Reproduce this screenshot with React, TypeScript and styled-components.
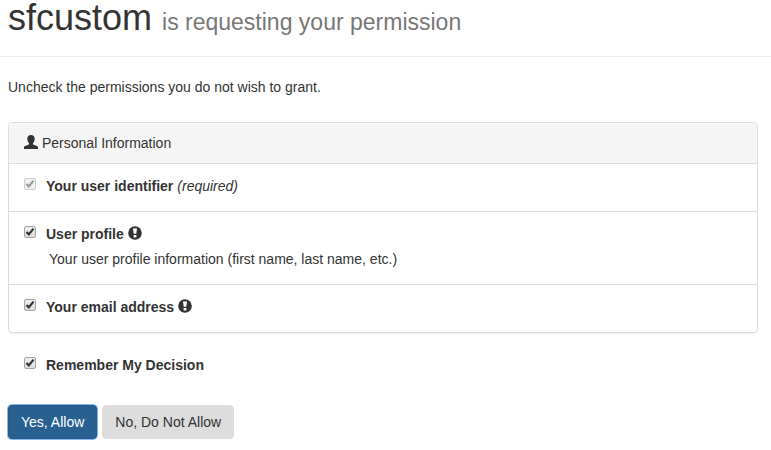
import React, { useState } from "react";
import styled, { createGlobalStyle } from "styled-components";

const GlobalStyle = createGlobalStyle`
  *, *::before, *::after { box-sizing: border-box; }
  body {
    margin: 0;
    background: #fff;
    color: #333;
    font-family: "Liberation Sans", Arial, Helvetica, sans-serif;
    font-size: 14px;
    line-height: 20px;
  }
`;

const Header = styled.header`
  padding: 0 8px 20px;
  border-bottom: 1px solid #eee;
`;

const Title = styled.h1`
  margin: 0;
  font-size: 36px;
  font-weight: 400;
  line-height: 36px;
`;

const Subtitle = styled.small`
  color: #777;
  font-size: 23px;
  line-height: 1;
`;

const Content = styled.form`
  padding: 20px 13px 11px 8px;
`;

const Intro = styled.p`
  margin: 0 0 25px;
`;

const Panel = styled.section`
  border: 1px solid #ddd;
  border-radius: 4px;
  box-shadow: 0 1px 1px rgba(0, 0, 0, 0.05);
  overflow: hidden;
`;

const PanelHeading = styled.h2`
  display: flex;
  align-items: flex-start;
  gap: 4px;
  margin: 0;
  padding: 10px 15px;
  background: #f5f5f5;
  font-size: 14px;
  font-weight: 400;
`;

const ScopeList = styled.ul`
  list-style: none;
  margin: 0;
  padding: 0;
`;

const ScopeItem = styled.li`
  padding: 12px 15px 15px;
  border-top: 1px solid #ddd;
`;

const ScopeLine = styled.div`
  display: flex;
  gap: 4px;
`;

const CheckLabel = styled.label`
  display: flex;
  align-items: flex-start;
  gap: 10px;
  font-weight: 700;
`;

const CheckBox = styled.span`
  display: grid;
  width: 12px;
  height: 12px;
  margin-top: 2px;
  > * { grid-area: 1 / 1; }
`;

const CheckInput = styled.input`
  appearance: none;
  width: 12px;
  height: 12px;
  margin: 0;
  border: 1px solid #a4a4a4;
  border-radius: 2px;
  background: linear-gradient(#eee, #dcdcdc);
  & + svg { visibility: hidden; pointer-events: none; color: #333; }
  &:checked + svg { visibility: visible; }
  &:disabled { border-color: #ccc; background: #f1f1f1; }
  &:disabled + svg { color: #999; }
`;

const Description = styled.p`
  margin: 5px 0 0;
  padding-left: 25px;
`;

const Glyph = styled.svg`
  flex: none;
  width: 14px;
  height: 14px;
  margin-top: 2px;
  fill: currentColor;
`;

const Remember = styled.div`
  padding: 22px 16px 30px;
`;

const Actions = styled.div`
  display: flex;
  gap: 5px;
`;

const Button = styled.button<{ $primary?: boolean }>`
  padding: 6px 12px;
  border: 1px solid ${(p) => (p.$primary ? "#265a88" : "#ddd")};
  border-radius: 4px;
  background: ${(p) => (p.$primary ? "#286090" : "#ddd")};
  box-shadow: ${(p) => (p.$primary ? "0 0 0 1px #8ab6f5" : "none")};
  color: ${(p) => (p.$primary ? "#fff" : "#333")};
  font: inherit;
  cursor: pointer;
`;

function UserIcon() {
  return (
    <Glyph viewBox="0 0 14 14" aria-hidden="true">
      <path d="M7 0C9.300 0 10.700 1.400 10.700 3.800c0 1.900-.6 3.500-1.700 4.400v.8c0 .4.2.6.6.8l3.300 1.300c.8.300 1.100.8 1.100 1.500V14H0v-1.400c0-.7.3-1.200 1.100-1.500l3.300-1.300c.4-.2.6-.4.6-.8v-.8C3.900 7.300 3.300 5.700 3.300 3.800 3.300 1.400 4.700 0 7 0Z" />
    </Glyph>
  );
}

function ExclamationIcon() {
  return (
    <Glyph viewBox="0 0 14 14" aria-hidden="true">
      <circle cx="7" cy="7" r="6.800" />
      <path d="M5 2.500h4l-.7 5.300H5.700Z M5.600 9h2.800v2.500H5.600Z" fill="#fff" />
    </Glyph>
  );
}

type CheckProps = { label: string; disabled?: boolean };

function Check({ label, disabled }: CheckProps) {
  const [checked, setChecked] = useState(true);
  return (
    <CheckLabel>
      <CheckBox>
        <CheckInput
          type="checkbox"
          checked={checked}
          disabled={disabled}
          onChange={(e) => setChecked(e.target.checked)}
        />
        <svg width="12" height="12" viewBox="0 0 12 12" aria-hidden="true">
          <path d="M2.500 6 4.800 8.400 9.500 2.600" fill="none" stroke="currentColor" strokeWidth="2.200" />
        </svg>
      </CheckBox>
      {label}
    </CheckLabel>
  );
}

export default function App() {
  return (
    <>
      <GlobalStyle />
      <Header>
        <Title>
          sfcustom <Subtitle>is requesting your permission</Subtitle>
        </Title>
      </Header>
      <Content onSubmit={(e: React.FormEvent) => e.preventDefault()}>
        <Intro>Uncheck the permissions you do not wish to grant.</Intro>
        <Panel>
          <PanelHeading>
            <UserIcon />
            Personal Information
          </PanelHeading>
          <ScopeList>
            <ScopeItem>
              <ScopeLine>
                <Check label="Your user identifier" disabled />
                <em>(required)</em>
              </ScopeLine>
            </ScopeItem>
            <ScopeItem>
              <ScopeLine>
                <Check label="User profile" />
                <ExclamationIcon />
              </ScopeLine>
              <Description>
                Your user profile information (first name, last name, etc.)
              </Description>
            </ScopeItem>
            <ScopeItem>
              <ScopeLine>
                <Check label="Your email address" />
                <ExclamationIcon />
              </ScopeLine>
            </ScopeItem>
          </ScopeList>
        </Panel>
        <Remember>
          <Check label="Remember My Decision" />
        </Remember>
        <Actions>
          <Button type="submit" $primary>Yes, Allow</Button>
          <Button type="button">No, Do Not Allow</Button>
        </Actions>
      </Content>
    </>
  );
}
